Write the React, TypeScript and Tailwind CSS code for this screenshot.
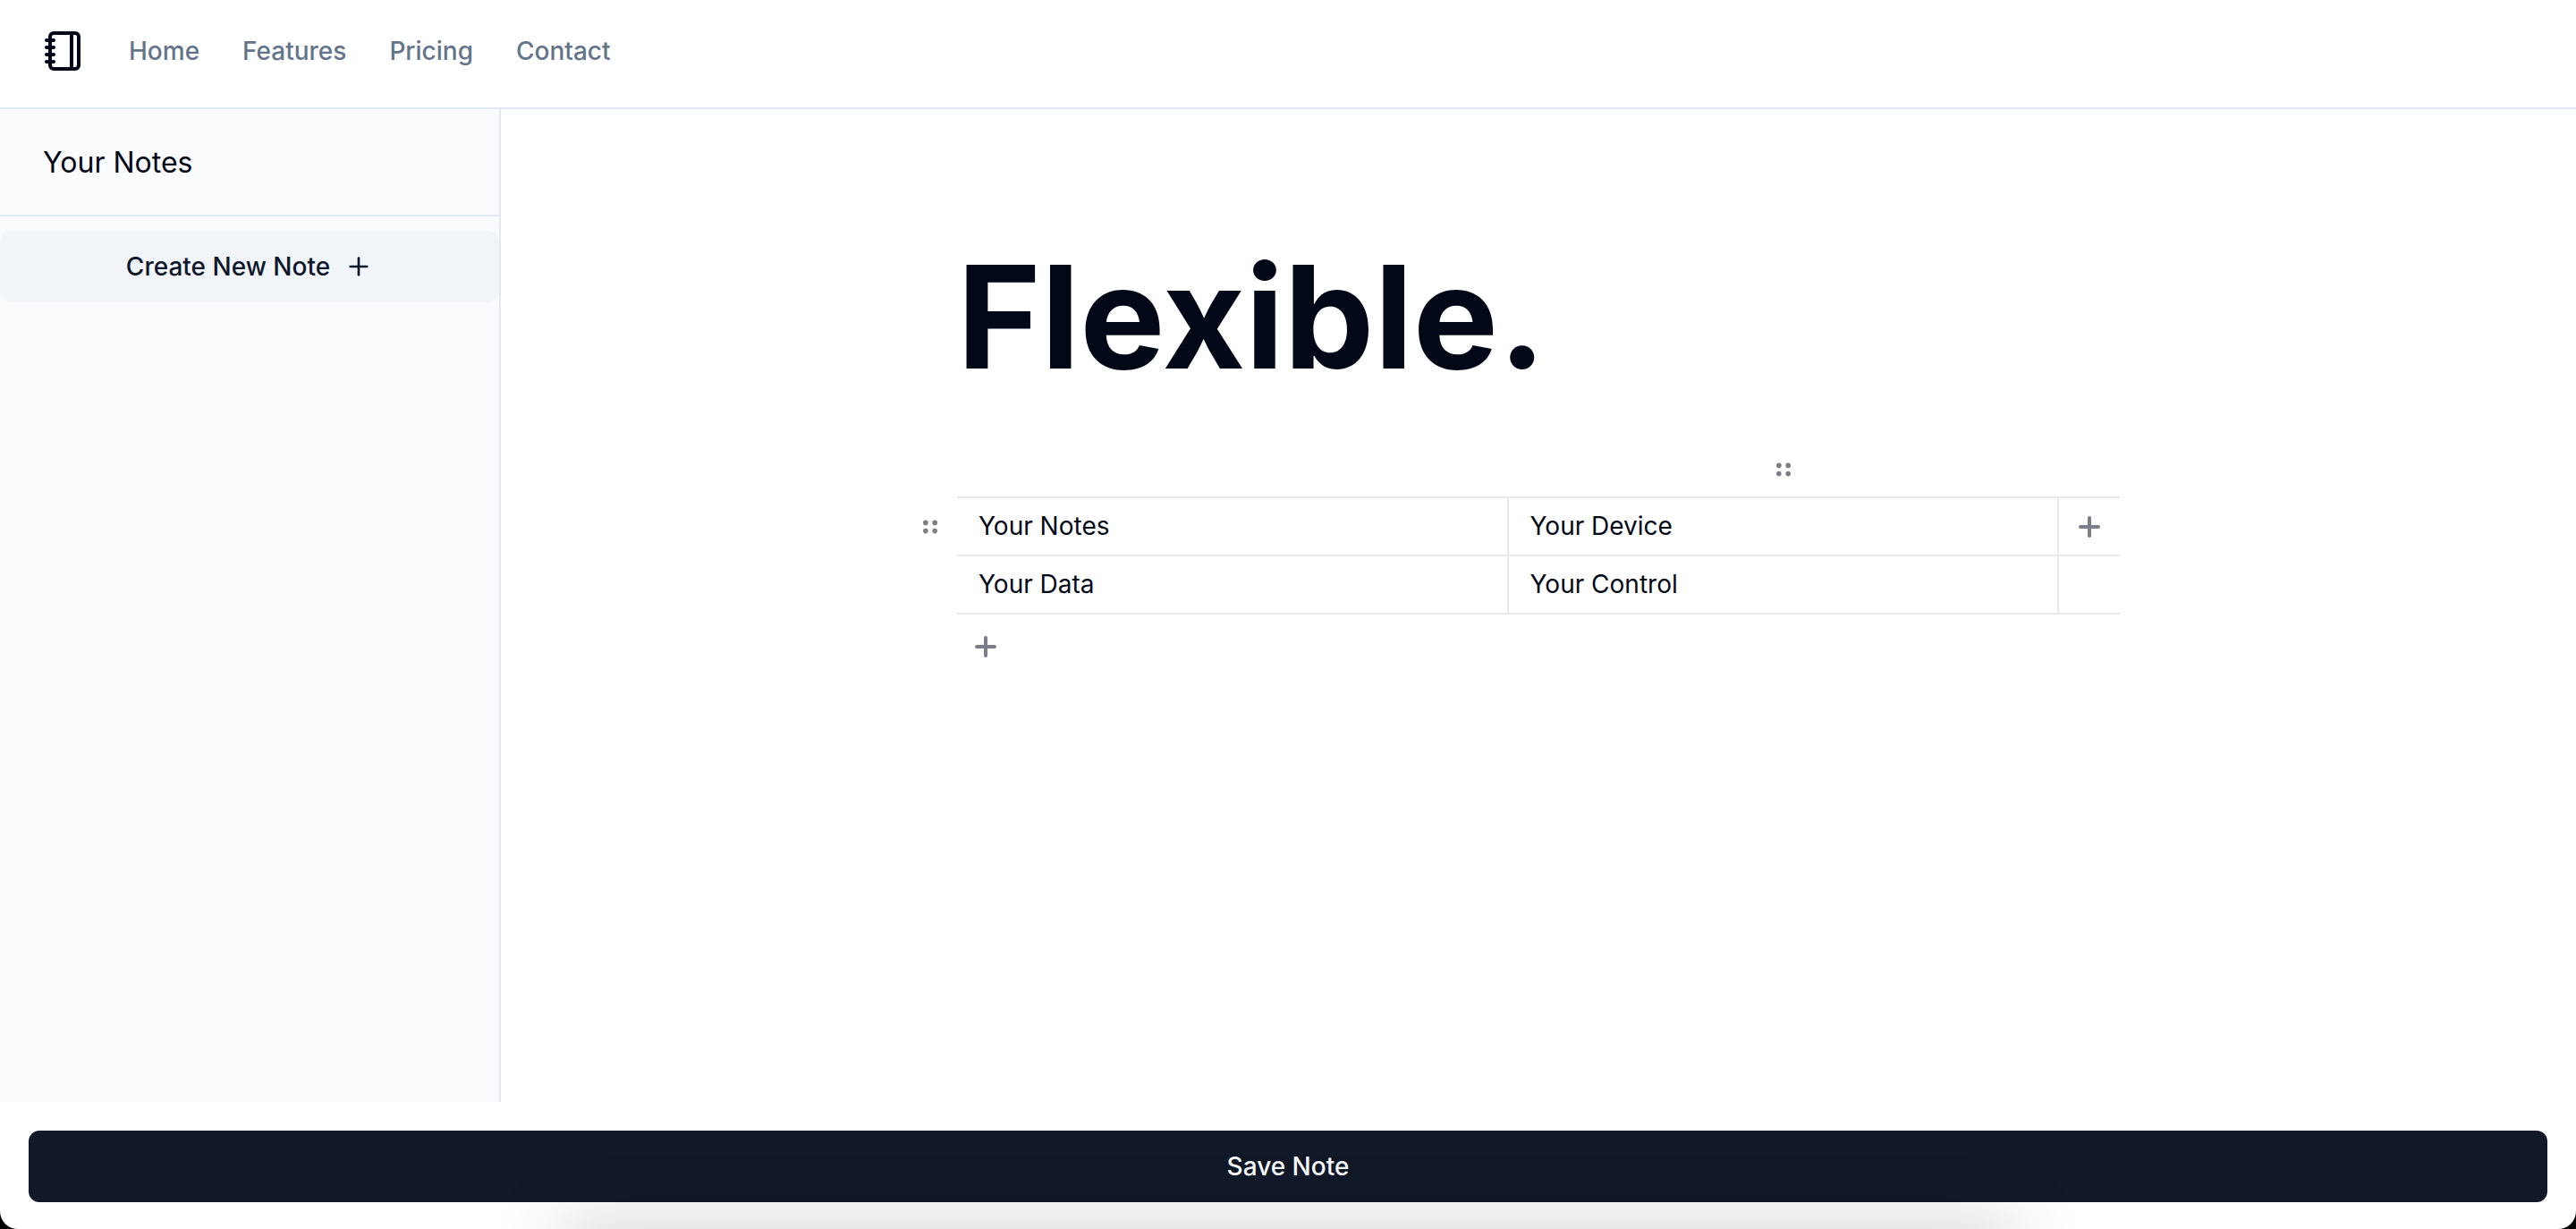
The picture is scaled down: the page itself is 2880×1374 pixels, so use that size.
import { Notebook, Plus } from "lucide-react";

const links = ["Home", "Features", "Pricing", "Contact"];
const rows = [
  ["Your Notes", "Your Device"],
  ["Your Data", "Your Control"],
];

function Grip() {
  return (
    <svg className="size-4" viewBox="0 0 16 16" fill="currentColor" aria-hidden="true">
      <circle cx="2.8" cy="3.4" r="2.8" />
      <circle cx="13.2" cy="3.4" r="2.8" />
      <circle cx="2.8" cy="12.6" r="2.8" />
      <circle cx="13.2" cy="12.6" r="2.8" />
    </svg>
  );
}

function Cross() {
  return (
    <svg className="size-6" viewBox="0 0 24 24" fill="none" stroke="currentColor" strokeWidth="4" strokeLinecap="round" aria-hidden="true">
      <path d="M12 2v20M2 12h20" />
    </svg>
  );
}

export default function App() {
  return (
    <div className="bg-black">
      <div className="relative flex h-screen flex-col overflow-hidden rounded-b-[20px] bg-white font-['Inter',sans-serif] text-[28px] leading-10 text-[#020817]">
        <header className="flex items-center gap-12 border-b-2 border-[#e2e8f0] px-12 pt-[33px] pb-[39px]">
          <Notebook className="size-12" aria-label="Notebook" />
          <nav className="flex gap-12 font-medium text-[#64748b]">
            {links.map((link) => (
              <a key={link} href="#">{link}</a>
            ))}
          </nav>
        </header>

        <div className="flex min-h-0 flex-1">
          <aside className="w-[560px] shrink-0 border-r-2 border-[#e2e8f0] bg-[#fafbfd]">
            <h2 className="border-b-2 border-[#e2e8f0] px-12 pt-9 pb-[34px] text-[32px] leading-12">Your Notes</h2>
            <button className="mt-4 flex h-20 w-full items-center justify-center gap-4 rounded-xl bg-[#f1f5f9] font-medium text-[#0f172a]">
              Create New Note
              <Plus className="size-8" />
            </button>
          </aside>

          <main className="flex-1">
            <div className="mx-auto w-[1300px] pt-[132px]">
              <h1 className="text-[160px] leading-[200px] font-bold">Flexible.</h1>
              <div className="relative mt-[101px]">
                <button aria-label="Move column" className="absolute -top-[38px] left-[916px] text-[#7b7d89]">
                  <Grip />
                </button>
                <button aria-label="Move row" className="absolute top-[26px] -left-[38px] text-[#7b7d89]">
                  <Grip />
                </button>
                <table className="w-full table-fixed border-collapse">
                  <colgroup>
                    <col />
                    <col />
                    <col className="w-[69px]" />
                  </colgroup>
                  <tbody>
                    {rows.map((row, index) => (
                      <tr key={row[0]} className="h-[65px] border-y-2 border-[#e8e8eb]">
                        {row.map((cell) => (
                          <td key={cell} className="border-r-2 border-[#e8e8eb] px-6 pb-0.5">{cell}</td>
                        ))}
                        <td className="text-[#7b7d89]">
                          {index === 0 && (
                            <button aria-label="Add column" className="mx-auto block">
                              <Cross />
                            </button>
                          )}
                        </td>
                      </tr>
                    ))}
                  </tbody>
                </table>
                <button aria-label="Add row" className="mt-6 ml-5 block text-[#7b7d89]">
                  <Cross />
                </button>
              </div>
            </div>
          </main>
        </div>

        <footer className="px-8 pt-8 pb-[30px]">
          <button className="h-20 w-full rounded-xl bg-[#111827] font-medium text-[#f8fafc]">Save Note</button>
        </footer>
        <div className="pointer-events-none absolute top-full right-[628px] left-[628px] h-10 shadow-[0_0_80px_rgba(0,0,0,0.25)]" />
      </div>
    </div>
  );
}
